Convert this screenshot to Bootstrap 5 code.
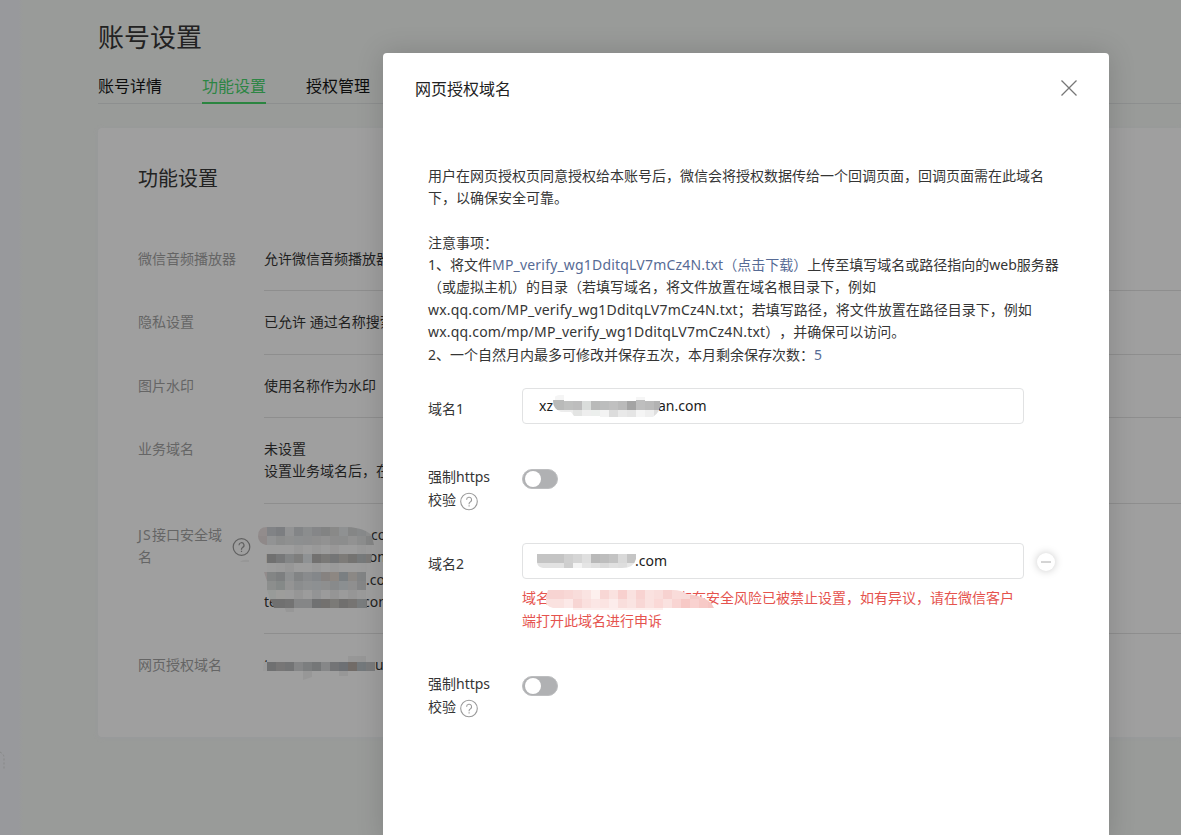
<!DOCTYPE html>
<html lang="zh-CN">
<head>
<meta charset="utf-8">
<meta name="viewport" content="width=device-width, initial-scale=1">
<title>账号设置</title>
<link href="https://cdn.jsdelivr.net/npm/bootstrap@5.3.0/dist/css/bootstrap.min.css" rel="stylesheet">
<style>
body{font-family:"Noto Sans","Noto Sans CJK SC",sans-serif;font-size:14px;line-height:22.4px;color:#1f1f1f;background:#999b99;height:835px;text-spacing-trim:space-all}
.shell{height:835px}
.rail{width:23px;background:linear-gradient(90deg,#98999c 80%,#999b99)}
.page-main{padding-left:75px;min-width:0}
.page-title{font-size:26px;line-height:36px;margin:19px 0 0;font-weight:400;color:#222}
.tabs-line{height:49px;gap:40px;border-bottom:1px solid #8d8f8f}
.tabs-line .nav-link{padding:19px 0 0;font-size:16px;line-height:24px;color:#0d0d0d;height:49px;border-bottom:2px solid transparent;border-radius:0}
.tabs-line .nav-link.active{color:#2d8544;border-color:#2b8540}
.panel{margin-top:24px;height:609px;background:#9f9f9f;border-radius:4px 0 0 4px;box-shadow:0 1px 4px #98999c;padding-left:40px}
.panel-title{font-size:20px;line-height:28px;font-weight:400;margin:0;padding:37px 0 34.8px;color:#222}
.set-label{width:126px;padding:20px 0;color:#656565}
.set-value{padding:20px 0;border-bottom:1px solid #8e8e8e}
.gap-box{display:inline-block}
.dialog{left:383px;top:53px;width:726px;height:790px;background:#fff;border-radius:4px 4px 0 0;box-shadow:0 0 28px rgba(0,0,0,.16);color:#353535}
.dialog-head{padding:24px 32px 0;height:111.8px;font-size:16px;line-height:24px;color:#222}
.dialog-body{padding:0 45px}
.dialog a,.count{color:#576b95;text-decoration:none}
.latin-a{letter-spacing:.19px}
.notes{margin-top:22px}
.field-label{width:94px;flex:none}
.field-label .second{margin-top:.8px}
.field{width:502px;height:36px;border:1px solid #e1e2e3;border-radius:4px;padding:5px 16px;line-height:24px;color:#1b1b1b}
.switch-off{width:36px;height:20px;border-radius:10px;background:#b0b1b3;border:1px solid #bdbec0;padding:1px;margin-top:3px}
.switch-off i{width:16px;height:16px;border-radius:50%;background:#fff;margin-left:1px}
.minus-btn{width:18px;height:18px;border-radius:50%;background:#fff;box-shadow:0 0 9px rgba(0,0,0,.22);margin:2px 0 0 13px}
.warn-text{color:#e5534e;padding-top:8px;padding-left:94px}
.cover{left:0;top:0;pointer-events:none}
</style>
</head>
<body class="overflow-hidden">
<div class="shell d-flex position-relative overflow-hidden">
  <aside class="rail flex-shrink-0"></aside>
  <main class="page-main flex-grow-1">
    <h1 class="page-title">账号设置</h1>
    <nav class="nav tabs-line flex-nowrap">
      <a class="nav-link">账号详情</a><a class="nav-link active">功能设置</a><a class="nav-link">授权管理</a>
    </nav>
    <section class="panel">
      <h2 class="panel-title">功能设置</h2>
      <div class="d-flex"><div class="set-label">微信音频播放器</div><div class="set-value flex-grow-1">允许微信音频播放器</div></div>
      <div class="d-flex"><div class="set-label">隐私设置</div><div class="set-value flex-grow-1">已允许 通过名称搜索</div></div>
      <div class="d-flex"><div class="set-label">图片水印</div><div class="set-value flex-grow-1">使用名称作为水印</div></div>
      <div class="d-flex"><div class="set-label">业务域名</div><div class="set-value flex-grow-1">未设置<br>设置业务域名后，在</div></div>
      <div class="d-flex">
        <div class="set-label d-flex"><span style="width:92.500px"><span style="letter-spacing:1.300px">JS</span>接口安全域<br>名</span>
          <svg width="20" height="20" viewBox="0 0 20 20" fill="none" stroke="#606060" stroke-width="1.2" class="flex-shrink-0" style="margin-top:13.500px"><circle cx="10.5" cy="10" r="8.3"/><path d="M8 8.2a2.5 2.5 0 1 1 3.7 2.2c-.8.5-1.2.9-1.2 1.8v.5M10.500 13.700v1.300"/></svg></div>
        <div class="set-value flex-grow-1"><span class="gap-box" style="width:107px"></span>com<br><span class="gap-box" style="width:98px"></span>com<br><span class="gap-box" style="width:102px"></span>.com<br>te<span class="gap-box" style="width:86px"></span>com</div>
      </div>
      <div class="d-flex"><div class="set-label">网页授权域名</div><div class="set-value flex-grow-1 border-0">t<span class="gap-box" style="width:106px"></span>u</div></div>
    </section>
  </main>

  <svg class="cover position-absolute" width="383" height="835">
    <defs><clipPath id="c1"><path d="M267 527h80q19 1 25 9l2 9h-2v9l-1 9h-4v27h-1v9h1v9h-93l-4-9-3-9v-9l-3-9h-2v-9h4V554q-8-9 0-9-8-2-8-9 0-9 9-9M264 662h112l1 9H263z"/></clipPath></defs>
    <g clip-path="url(#c1)" id="gray-cover"></g>
    <path d="M285 608h9v4h-8zM303 671h9v6l-9 3zM339 671h9v5h-9zM348 656h18v6h-18zM240 562q3-3 9-2v2z" fill="#979797"/>
    <path d="M0 752q4 2 4 6v12" fill="none" stroke="#878888" stroke-dasharray="2 2"/>
  </svg>

  <div class="dialog position-absolute">
    <header class="dialog-head d-flex justify-content-between align-items-start"><span>网页授权域名</span>
      <svg width="16" height="16" viewBox="0 0 16 16" stroke="#777" stroke-width="1.3" style="margin-top:3px"><path d="M.5.5l15 15M15.500.500l-15 15"/></svg></header>
    <div class="dialog-body">
      <div class="text-nowrap">用户在网页授权页同意授权给本账号后，微信会将授权数据传给一个回调页面，回调页面需在此域名<br>下，以确保安全可靠。</div>
      <div class="notes text-nowrap">注意事项：<br>1、将文件<a href="#"><span class="latin-a">MP_verify_wg1DditqLV7mCz4N.txt</span>（点击下载）</a>上传至填写域名或路径指向的web服务器<br>（或虚拟主机）的目录（若填写域名，将文件放置在域名根目录下，例如<br><span class="latin-a">wx.qq.com/MP_verify_wg1DditqLV7mCz4N.txt</span>；若填写路径，将文件放置在路径目录下，例如<br><span class="latin-a">wx.qq.com/mp/MP_verify_wg1DditqLV7mCz4N.txt</span>），并确保可以访问。<br>2、一个自然月内最多可修改并保存五次，本月剩余保存次数：<span class="count">5</span></div>

      <div class="d-flex" style="margin-top:22px"><div class="field-label" style="padding-top:9.6px">域名1</div><div class="field">xz<span class="gap-box" style="width:105px"></span>an.com</div></div>
      <div class="d-flex" style="margin-top:42px"><div class="field-label">强制https<br><span class="second d-flex">校验<svg width="20" height="20" viewBox="0 0 20 20" fill="none" stroke="#999" stroke-width="1.1" style="margin:2px 0 0 3px"><circle cx="10" cy="10.500" r="8.300"/><path d="M7.600 8.700a2.500 2.500 0 1 1 3.700 2.200c-.8.5-1.200.9-1.200 1.800v.5M10.100 14.200v1.200"/></svg></span></div><div class="switch-off"><i class="d-block"></i></div></div>

      <div class="d-flex align-items-center" style="margin-top:31.400px"><div class="field-label" style="padding-top:7px">域名2</div><div class="field"><span class="gap-box" style="width:96px"></span>.com</div>
        <div class="minus-btn d-flex align-items-center justify-content-center"><svg width="10" height="2"><path d="M0 1h10" stroke="#aaa"/></svg></div></div>
      <div class="warn-text text-nowrap">域名<span class="gap-box" style="width:128px"></span>存在安全风险已被禁止设置，如有异议，请在微信客户<br><span class="d-block" style="margin-top:.600px">端打开此域名进行申诉</span></div>
      <div class="d-flex" style="margin-top:41px"><div class="field-label">强制https<br><span class="d-flex">校验<svg width="20" height="20" viewBox="0 0 20 20" fill="none" stroke="#999" stroke-width="1.1" style="margin:2px 0 0 3px"><circle cx="10" cy="10.500" r="8.300"/><path d="M7.600 8.700a2.500 2.500 0 1 1 3.700 2.200c-.8.5-1.200.9-1.200 1.800v.5M10.100 14.200v1.200"/></svg></span></div><div class="switch-off" style="margin-top:2.400px"><i class="d-block"></i></div></div>
    </div>
  </div>

  <svg class="cover position-absolute" width="1181" height="835">
    <defs>
      <clipPath id="c2"><path d="M553 401q0-5 6-6h5v6h72v-4h9v4h15v3q1 7-7 13h-44l-9 0v-1l-26 0-3-4h-10q-8-3-8-11"/></clipPath>
      <clipPath id="c3"><path d="M537 554h99v5q-2 9-14 9h-54v0h-25q-6-1-6-6z"/></clipPath>
      <clipPath id="c4"><path d="M548 590h125q8 0 14 4 22 2 27 14v2h-51v0h-90l-8-2h-12q-8-2-8-9z"/></clipPath>
    </defs>
    <g clip-path="url(#c2)" id="cover-a"></g>
    <g clip-path="url(#c3)" id="cover-b"></g>
    <g clip-path="url(#c4)" id="cover-c"></g>
  </svg>
</div>
<script src="https://cdn.jsdelivr.net/npm/bootstrap@5.3.0/dist/js/bootstrap.bundle.min.js"></script>
<script>
// Censoring mosaics: each strip is [x, y, height, colours of its 9px cells]
const strips = {
  'gray-cover': [
    [258,527,9,'928c8c 818386 7c7e81 929394 838587 8b8d8e 858688 828383 898988 8f9192 858686 888a8b 8e8f8f'],
    [258,536,9,'8f8989 929394 8c8d8d 8f9090 8d8f90 8d8e8f 8f8f8f 929292 8d8d8d 8c8d8d 929292 8d8e8e 858686'],
    [267,545,9,'9e9e9e 9e9e9e 9e9e9e 999999 9d9d9d 999999 9d9d9d 999898 9d9d9d 9d9d9d 9a9a9a 9d9d9d'],
    [258,554,9,'9a9690 707070 777879 838586 7e7e7d 8f9294 727170 7a7977 747576 7d7b78 747371 777a7b 7c7a78'],
    [267,563,9,'9d9d9d 9b9b9b 979797 9d9d9d 9d9d9d 999999 9d9d9d 9a9a9a 9d9d9d 9d9d9d 9d9d9d 9d9d9d'],
    [258,572,9,'938c8c 838585 7d7f80 8f9192 828485 898b8d 84878a 868280 8d8782 7a7f82 8b8885 828485'],
    [258,581,9,'9b9b9b 8c8e8d 858988 949494 8b8d8e 8f9192 8d9092 8e8f8f 888a8b 8b8f91 8f8f8f 858687'],
    [258,590,9,'9c9c9a 989b99 9d9d9b 9c9c9c 969696 9c9c9c 939495 9b9b9b 959595 9b9b9b 969696 9b9b9b'],
    [267,599,9,'707070 707070 737373 858687 858687 707172 73716f 7b7a77 706f6e 767472 7a7d7e 777776'],
    [258,662,9,'9b9b9b 6f7071 777676 737475 858687 7c7e7f 757778 868788 737476 6d7074 716b67 74797c 7a7b7c']],
  'cover-a': [
    [546,394,6,'ffffff f5f5f5 ffffff ffffff ffffff ffffff ffffff ffffff ffffff ffffff f6f6f6 ffffff'],
    [546,400,10,'b8b8b8 b9bab9 bfc0bf bdbdbd dadddb b9bab9 bcbdbd c0c0c0 bababa a4a4a4 bebebe bababa b2b2b2'],
    [546,410,7,'f4f4f4 ededed ececec e3e4e3 eeeeee ecefed f3f3f3 dcdcdc e9e9e9 e5e5e5 f5f5f5 efefef dedede']],
  'cover-b': [
    [537,554,9,'c4c4c4 c4c4c4 c4c4c4 cfcfcf d5d5d5 dfdfdf b9b9b9 bdbdbd c3c3c3 d9d9d9 c5c5c5'],
    [537,563,5,'e2e2e2 e2e2e2 e2e2e2 cecece f3f3f3 e5e5e5 e0e0e0 dadada e0e0e0 dedede e7e7e7']],
  'cover-c': [
    [546,590,9,'f7d4d2 f7d4d2 f8d8d6 f8dddb fae4e2 fdf0ee f8d7d5 fae2e0 f8d0ce fae2e0 f8d3d1 fae2e0 f9dedc f7d2d0 f9dcda f8dcda f6cbc8 f7d0ce f7d0ce'],
    [546,599,9,'fae2e0 fae2e0 fce9e8 f7d5d3 fae0de fbe6e5 fbe4e2 fceceb f9dedc fae4e2 f8d7d5 fae2e0 fad9d7 fae2e0 f9d5d3 f7c9c6 f9d2d0 f7cac7 f6c5c2'],
    [573,608,2,'fdf0ee fdf0ee fdeeed fdf0ee fdeeed fdf0ee fdeeed fdf0ee fdf0ee fdf0ee']]
};
for (const [id, rows] of Object.entries(strips)) {
  document.getElementById(id).innerHTML = rows.map(([x, y, h, c]) =>
    c.split(' ').map((v, i) => `<rect x="${x + i * 9}" y="${y}" width="9" height="${h}" fill="#${v}"/>`).join('')).join('');
}
</script>
</body>
</html>
